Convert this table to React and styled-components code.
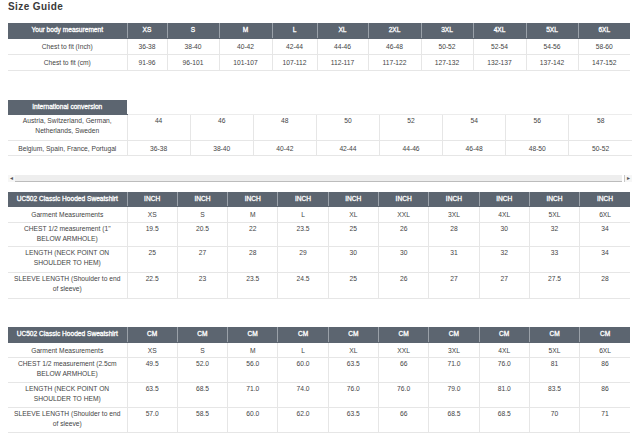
import React from "react";
import styled, { createGlobalStyle } from "styled-components";

const GlobalStyle = createGlobalStyle`
  body {
    margin: 0;
    background: #ffffff;
    font-family: "Liberation Sans", Arial, sans-serif;
  }
`;

const Page = styled.div`
  padding: 0 8px;
  width: 624px;
`;

const Title = styled.h1`
  margin: 0;
  height: 23px;
  font-size: 10px;
  line-height: 13px;
  font-weight: bold;
  letter-spacing: 0.4px;
  color: #3a3a3a;
`;

const Table = styled.table`
  border-collapse: collapse;
  table-layout: fixed;
  width: ${({ $width }) => $width}px;
  margin-bottom: ${({ $gap }) => $gap}px;
  font-size: 6.7px;
  color: #444;
`;

const Head = styled.th`
  background: ${({ $blank }) => ($blank ? "#ffffff" : "#5c6570")};
  color: #ffffff;
  font-size: 6.6px;
  font-weight: normal;
  -webkit-text-stroke: 0.3px #ffffff;
  height: ${({ $h }) => $h}px;
  padding: 0 2px;
  line-height: 10px;
  text-align: center;
  white-space: nowrap;
  box-sizing: border-box;
  border-left: 1px solid ${({ $blank }) => ($blank ? "#ffffff" : "#9aa1a9")};
  border-bottom: 1px solid ${({ $blank }) => ($blank ? "#ececec" : "#5c6570")};
  &:first-child {
    border-left: none;
  }
`;

const Cell = styled.td`
  padding: ${({ $h }) => ($h > 20 ? 1 : 3)}px 2px 0;
  line-height: 10px;
  text-align: center;
  vertical-align: top;
  border: 1px solid #e6e6e6;
  border-top: none;
  height: ${({ $h }) => $h}px;
  box-sizing: border-box;
  &:first-child {
    border-left: none;
    padding-left: 6px;
    padding-right: 6px;
  }
  &:last-child {
    border-right: none;
  }
`;

const Scrollbar = styled.div`
  display: flex;
  align-items: stretch;
  height: 7px;
  margin: 19px 0 10px;
  width: 624px;
  font-size: 6px;
  color: #555;
`;

const ScrollButton = styled.div`
  width: 7px;
  display: flex;
  align-items: center;
  justify-content: center;
  line-height: 7px;
  background: #f6f6f6;
  border-left: ${({ $right }) => ($right ? "1px solid #c8c8c8" : "none")};
`;

const ScrollThumb = styled.div`
  flex: 1;
  background: #eeeeee;
  border-bottom: 1px solid #bcbcbc;
  margin-right: 2px;
`;

const sizes = ["XS", "S", "M", "L", "XL", "2XL", "3XL", "4XL", "5XL", "6XL"];
const bodyWidths = [119, 40, 52, 53, 45, 51, 53, 52, 53, 52, 52];

const bodyRows = [
  ["Chest to fit (Inch)", "36-38", "38-40", "40-42", "42-44", "44-46", "46-48", "50-52", "52-54", "54-56", "58-60"],
  ["Chest to fit (cm)", "91-96", "96-101", "101-107", "107-112", "112-117", "117-122", "127-132", "132-137", "137-142", "147-152"],
];

const intlRows = [
  { h: 26, cells: ["Austria, Switzerland, German, Netherlands, Sweden", "44", "46", "48", "50", "52", "54", "56", "58"] },
  { h: 15, cells: ["Belgium, Spain, France, Portugal", "36-38", "38-40", "40-42", "42-44", "44-46", "46-48", "48-50", "50-52"] },
];

const garmentSizes = ["XS", "S", "M", "L", "XL", "XXL", "3XL", "4XL", "5XL", "6XL"];

const inchRows = [
  { h: 16, cells: ["Garment Measurements", ...garmentSizes] },
  { h: 24, cells: ["CHEST 1/2 measurement (1\" BELOW ARMHOLE)", "19.5", "20.5", "22", "23.5", "25", "26", "28", "30", "32", "34"] },
  { h: 26, cells: ["LENGTH (NECK POINT ON SHOULDER TO HEM)", "25", "27", "28", "29", "30", "30", "31", "32", "33", "34"] },
  { h: 26, cells: ["SLEEVE LENGTH (Shoulder to end of sleeve)", "22.5", "23", "23.5", "24.5", "25", "26", "27", "27", "27.5", "28"] },
];

const cmRows = [
  { h: 15, cells: ["Garment Measurements", ...garmentSizes] },
  { h: 25, cells: ["CHEST 1/2 measurement (2.5cm BELOW ARMHOLE)", "49.5", "52.0", "56.0", "60.0", "63.5", "66", "71.0", "76.0", "81", "86"] },
  { h: 25, cells: ["LENGTH (NECK POINT ON SHOULDER TO HEM)", "63.5", "68.5", "71.0", "74.0", "76.0", "76.0", "79.0", "81.0", "83.5", "86"] },
  { h: 25, cells: ["SLEEVE LENGTH (Shoulder to end of sleeve)", "57.0", "58.5", "60.0", "62.0", "63.5", "66", "68.5", "68.5", "70", "71"] },
];

const Cols = ({ widths }) => (
  <colgroup>
    {widths.map((w, i) => (
      <col key={i} style={{ width: w }} />
    ))}
  </colgroup>
);

const GarmentTable = ({ unit, rows, gap, headH }) => (
  <Table $width={622} $gap={gap}>
    <Cols widths={[119, ...Array(10).fill(50.3)]} />
    <thead>
      <tr>
        <Head $h={headH}>UC502 Classic Hooded Sweatshirt</Head>
        {garmentSizes.map((s) => (
          <Head key={s} $h={headH}>
            {unit}
          </Head>
        ))}
      </tr>
    </thead>
    <tbody>
      {rows.map((r) => (
        <tr key={r.cells[0]}>
          {r.cells.map((c, i) => (
            <Cell key={i} $h={r.h}>
              {c}
            </Cell>
          ))}
        </tr>
      ))}
    </tbody>
  </Table>
);

const App = () => {
  return (
    <Page>
      <GlobalStyle />
      <Title>Size Guide</Title>

      <Table $width={622} $gap={29}>
        <Cols widths={bodyWidths} />
        <thead>
          <tr>
            <Head $h={15}>Your body measurement</Head>
            {sizes.map((s) => (
              <Head key={s} $h={15}>
                {s}
              </Head>
            ))}
          </tr>
        </thead>
        <tbody>
          {bodyRows.map((r) => (
            <tr key={r[0]}>
              {r.map((c, i) => (
                <Cell key={i} $h={16}>
                  {c}
                </Cell>
              ))}
            </tr>
          ))}
        </tbody>
      </Table>

      <Table $width={624} $gap={0}>
        <Cols widths={[119, ...Array(8).fill(63.1)]} />
        <thead>
          <tr>
            <Head $h={15}>International conversion</Head>
            {Array.from({ length: 8 }).map((_, i) => (
              <Head key={i} $h={15} $blank />
            ))}
          </tr>
        </thead>
        <tbody>
          {intlRows.map((r) => (
            <tr key={r.cells[0]}>
              {r.cells.map((c, i) => (
                <Cell key={i} $h={r.h}>
                  {c}
                </Cell>
              ))}
            </tr>
          ))}
        </tbody>
      </Table>

      <Scrollbar>
        <ScrollButton>◂</ScrollButton>
        <ScrollThumb />
        <ScrollButton $right>▸</ScrollButton>
      </Scrollbar>

      <GarmentTable unit="INCH" rows={inchRows} gap={28} headH={14} />
      <GarmentTable unit="CM" rows={cmRows} gap={0} headH={16} />
    </Page>
  );
};

export default App;
